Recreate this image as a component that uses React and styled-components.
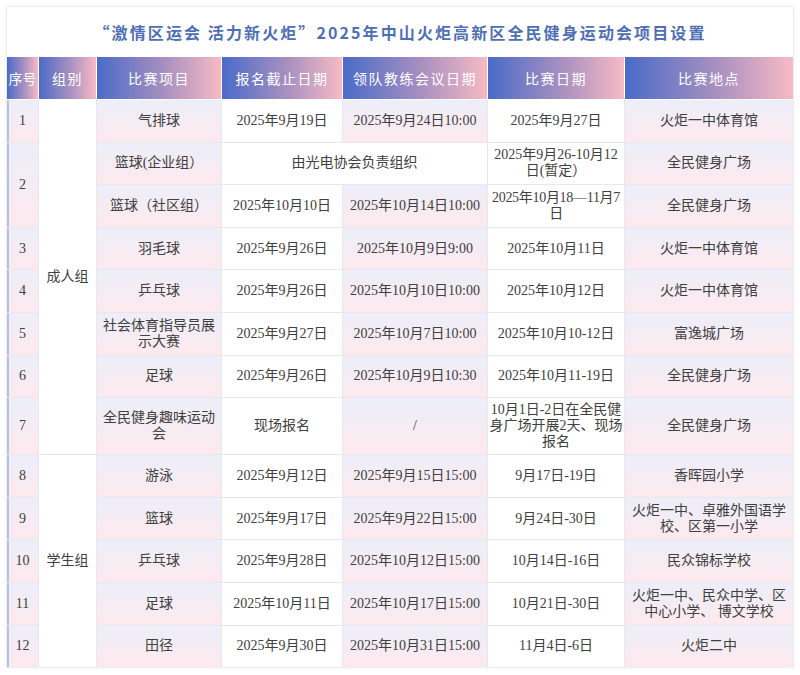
import React from "react";
import styled, { createGlobalStyle, css } from "styled-components";

const GlobalStyle = createGlobalStyle`
  html, body { margin: 0; padding: 0; background: #ffffff; }
  body { font-family: "Liberation Serif", "Noto Sans CJK SC", serif; }
  * { box-sizing: border-box; }
`;

const Page = styled.div`
  padding: 7px;
  width: 800px;
`;

const Card = styled.div`
  width: 786px;
  background: #ffffff;
  box-shadow: 0 0 0 1px #ededf0, 0 0 6px rgba(0, 0, 0, 0.05);
`;

const Title = styled.h1`
  margin: 0;
  height: 50px;
  display: flex;
  align-items: center;
  justify-content: center;
  font-family: "Noto Sans CJK SC", sans-serif;
  font-size: 16px;
  font-weight: 700;
  letter-spacing: 2.1px;
  color: #4f6fb4;
`;

const COLS = "31px 57px 124px 120px 144px 136px 1fr";

const HeaderRow = styled.div`
  display: grid;
  grid-template-columns: ${COLS};
  column-gap: 1px;
  height: 42px;
  background: #ffffff;
`;

const HeadCell = styled.div`
  display: flex;
  align-items: center;
  justify-content: center;
  background: linear-gradient(90deg, #4a6bc8 0%, #a990c0 55%, #f7bac4 100%);
  color: #ffffff;
  font-family: "Noto Sans CJK SC", sans-serif;
  font-size: 14px;
  font-weight: 400;
  letter-spacing: ${(p) => (p.$tight ? "0" : "1.5px")};
  white-space: nowrap;
`;

const Body = styled.div`
  display: grid;
  grid-template-columns: ${COLS};
  grid-template-rows: repeat(7, 41.6px) 56px repeat(5, 41.6px);
  gap: 1px;
  margin-top: 1px;
  background: #e7e7ee;
`;

const Cell = styled.div`
  display: flex;
  align-items: center;
  justify-content: center;
  text-align: center;
  white-space: nowrap;
  font-size: 14px;
  line-height: 16px;
  color: #404040;
  background: #ffffff;
  letter-spacing: ${(p) => (p.$narrow ? "-0.3px" : "0")};
  ${(p) =>
    p.$grad &&
    css`
      background: linear-gradient(180deg, #eceef9 0%, #f5ecf3 50%, #fde9ed 100%);
    `}
  ${(p) => p.$rows && css`grid-row: span ${p.$rows};`}
  ${(p) => p.$cols && css`grid-column: span ${p.$cols};`}
  ${(p) => p.$edge && css`box-shadow: inset 2px 0 0 #b7c2e2;`}
`;

const headers = ["序号", "组别", "比赛项目", "报名截止日期", "领队教练会议日期", "比赛日期", "比赛地点"];

const ML = ({ lines }) => (
  <span>
    {lines.map((l, i) => (
      <React.Fragment key={i}>
        {i > 0 && <br />}
        {l}
      </React.Fragment>
    ))}
  </span>
);

export default function App() {
  return (
    <>
      <GlobalStyle />
      <Page>
        <Card>
          <Title>“激情区运会 活力新火炬”2025年中山火炬高新区全民健身运动会项目设置</Title>
          <HeaderRow>
            {headers.map((h, i) => (
              <HeadCell key={h} $tight={i === 0}>
                {h}
              </HeadCell>
            ))}
          </HeaderRow>
          <Body>
            {/* row 1 */}
            <Cell $grad $edge>1</Cell>
            <Cell $rows={8}>成人组</Cell>
            <Cell $grad>气排球</Cell>
            <Cell>2025年9月19日</Cell>
            <Cell $grad>2025年9月24日10:00</Cell>
            <Cell>2025年9月27日</Cell>
            <Cell $grad>火炬一中体育馆</Cell>

            {/* row 2a */}
            <Cell $grad $edge $rows={2}>2</Cell>
            <Cell $grad>篮球(企业组）</Cell>
            <Cell $cols={2}>由光电协会负责组织</Cell>
            <Cell><ML lines={["2025年9月26-10月12", "日(暂定）"]} /></Cell>
            <Cell $grad>全民健身广场</Cell>

            {/* row 2b */}
            <Cell $grad>篮球（社区组）</Cell>
            <Cell>2025年10月10日</Cell>
            <Cell $grad>2025年10月14日10:00</Cell>
            <Cell $narrow><ML lines={["2025年10月18—11月7", "日"]} /></Cell>
            <Cell $grad>全民健身广场</Cell>

            {/* row 3 */}
            <Cell $grad $edge>3</Cell>
            <Cell $grad>羽毛球</Cell>
            <Cell>2025年9月26日</Cell>
            <Cell $grad>2025年10月9日9:00</Cell>
            <Cell>2025年10月11日</Cell>
            <Cell $grad>火炬一中体育馆</Cell>

            {/* row 4 */}
            <Cell $grad $edge>4</Cell>
            <Cell $grad>乒乓球</Cell>
            <Cell>2025年9月26日</Cell>
            <Cell $grad>2025年10月10日10:00</Cell>
            <Cell>2025年10月12日</Cell>
            <Cell $grad>火炬一中体育馆</Cell>

            {/* row 5 */}
            <Cell $grad $edge>5</Cell>
            <Cell $grad><ML lines={["社会体育指导员展", "示大赛"]} /></Cell>
            <Cell>2025年9月27日</Cell>
            <Cell $grad>2025年10月7日10:00</Cell>
            <Cell>2025年10月10-12日</Cell>
            <Cell $grad>富逸城广场</Cell>

            {/* row 6 */}
            <Cell $grad $edge>6</Cell>
            <Cell $grad>足球</Cell>
            <Cell>2025年9月26日</Cell>
            <Cell $grad>2025年10月9日10:30</Cell>
            <Cell>2025年10月11-19日</Cell>
            <Cell $grad>全民健身广场</Cell>

            {/* row 7 */}
            <Cell $grad $edge>7</Cell>
            <Cell $grad><ML lines={["全民健身趣味运动", "会"]} /></Cell>
            <Cell>现场报名</Cell>
            <Cell $grad>/</Cell>
            <Cell><ML lines={["10月1日-2日在全民健", "身广场开展2天、现场", "报名"]} /></Cell>
            <Cell $grad>全民健身广场</Cell>

            {/* row 8 */}
            <Cell $grad $edge>8</Cell>
            <Cell $rows={5}>学生组</Cell>
            <Cell $grad>游泳</Cell>
            <Cell>2025年9月12日</Cell>
            <Cell $grad>2025年9月15日15:00</Cell>
            <Cell>9月17日-19日</Cell>
            <Cell $grad>香晖园小学</Cell>

            {/* row 9 */}
            <Cell $grad $edge>9</Cell>
            <Cell $grad>篮球</Cell>
            <Cell>2025年9月17日</Cell>
            <Cell $grad>2025年9月22日15:00</Cell>
            <Cell>9月24日-30日</Cell>
            <Cell $grad><ML lines={["火炬一中、卓雅外国语学", "校、区第一小学"]} /></Cell>

            {/* row 10 */}
            <Cell $grad $edge>10</Cell>
            <Cell $grad>乒乓球</Cell>
            <Cell>2025年9月28日</Cell>
            <Cell $grad>2025年10月12日15:00</Cell>
            <Cell>10月14日-16日</Cell>
            <Cell $grad>民众锦标学校</Cell>

            {/* row 11 */}
            <Cell $grad $edge>11</Cell>
            <Cell $grad>足球</Cell>
            <Cell>2025年10月11日</Cell>
            <Cell $grad>2025年10月17日15:00</Cell>
            <Cell>10月21日-30日</Cell>
            <Cell $grad><ML lines={["火炬一中、民众中学、区", "中心小学、 博文学校"]} /></Cell>

            {/* row 12 */}
            <Cell $grad $edge>12</Cell>
            <Cell $grad>田径</Cell>
            <Cell>2025年9月30日</Cell>
            <Cell $grad>2025年10月31日15:00</Cell>
            <Cell>11月4日-6日</Cell>
            <Cell $grad>火炬二中</Cell>
          </Body>
        </Card>
      </Page>
    </>
  );
}
